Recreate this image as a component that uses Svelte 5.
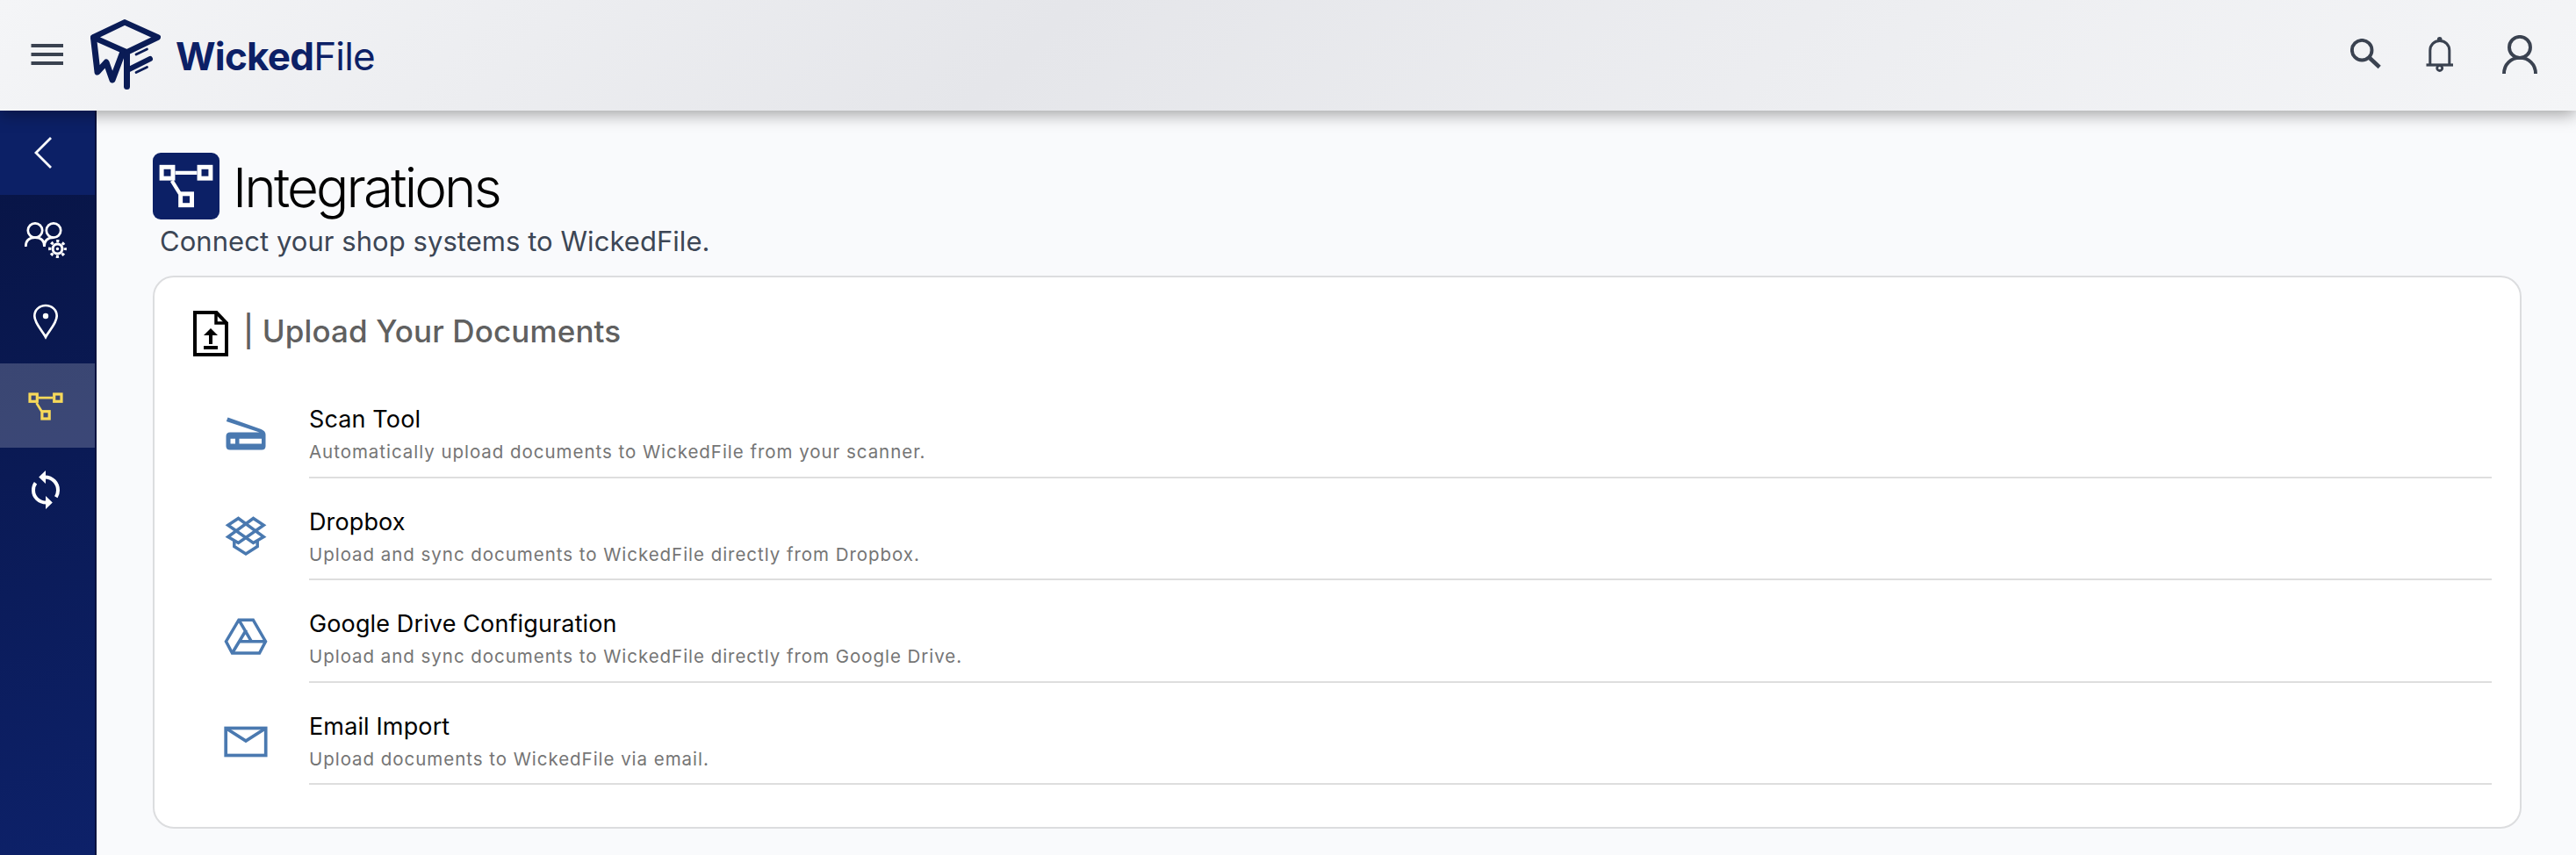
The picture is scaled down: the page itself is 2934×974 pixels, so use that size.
<script>
  /** @type {Array<{ icon: string, title: string, text: string }>} */
  const integrations = [
    {
      icon: "scan",
      title: "Scan Tool",
      text: "Automatically upload documents to WickedFile from your scanner."
    },
    {
      icon: "dropbox",
      title: "Dropbox",
      text: "Upload and sync documents to WickedFile directly from Dropbox."
    },
    {
      icon: "drive",
      title: "Google Drive Configuration",
      text: "Upload and sync documents to WickedFile directly from Google Drive."
    },
    {
      icon: "email",
      title: "Email Import",
      text: "Upload documents to WickedFile via email."
    }
  ];

  const navItems = ["back", "users", "location", "integrations", "sync"];
  const active = "integrations";
</script>

{#snippet flow()}
  <rect x="2" y="2" width="8.300" height="8.300" />
  <rect x="29.700" y="2" width="8.300" height="8.300" />
  <rect x="15.900" y="21.700" width="8.300" height="8.300" />
  <path d="M12 6.200H28M9.500 12L15.400 21.500" stroke-width="2.700" />
{/snippet}

<div class="app">
  <header class="topbar">
    <button class="menu" type="button" aria-label="Menu">
      <svg width="38" height="24" viewBox="0 0 38 24">
        <path d="M0.500 2H37M0.500 12H37M0.500 22H37" stroke="#3a4250" stroke-width="4" />
      </svg>
    </button>

    <div class="brand">
      <svg width="80" height="80" viewBox="0 0 80 80" fill="none" stroke="#0a1c56" stroke-linejoin="round" stroke-linecap="round">
        <path d="M3.200 20.500L39 3.300L76.800 20.500L41.500 37.500Z" stroke-width="6.400" />
        <path d="M3.500 21L8 60L18 49L25 69L37 37" stroke-width="7" />
        <path d="M41.500 38V76.500" stroke-width="7" />
        <path d="M44 57L68 45" stroke-width="6" />
        <path d="M52 40L64.500 34M52 60.500L64.500 54.500" stroke-width="2.800" />
      </svg>
      <span class="brand-name"><strong>Wicked</strong>File</span>
    </div>

    <div class="tools">
      <svg class="search" width="36" height="36" viewBox="0 0 36 36" fill="none" stroke="#3a4250">
        <circle cx="13.200" cy="13.200" r="11.300" stroke-width="3.900" />
        <path d="M22.200 22.200L33.200 32.500" stroke-width="4.600" />
      </svg>
      <svg class="bell" width="32" height="40" viewBox="0 0 32 40" fill="none" stroke="#3a4250">
        <path d="M4.800 32V15.500C4.800 9 9.500 4.500 15.800 4.500S26.800 9 26.800 15.500V32" stroke-width="3" />
        <path d="M0.500 32H31" stroke-width="3.200" />
        <circle cx="15.700" cy="35.500" r="3" stroke-width="2.800" />
        <circle cx="15.700" cy="2.900" r="2.800" fill="#3a4250" stroke="none" />
      </svg>
      <svg class="user" width="40" height="44" viewBox="0 0 40 44" fill="none" stroke="#3a4250" stroke-width="3.900">
        <circle cx="20" cy="13.900" r="12" />
        <path d="M2 44C2 33 10 25.900 20 25.900S38 33 38 44" />
      </svg>
    </div>
  </header>

  <div class="body">
    <nav class="sidebar">
      {#each navItems as item}
        <div class="nav-item" class:back={item === "back"} class:active={item === active}>
          {#if item === "back"}
            <svg width="108" height="96" viewBox="0 0 108 96" fill="none" stroke="#fff" stroke-width="2.800">
              <path d="M58 31L41 48L58 65" />
            </svg>
          {:else if item === "users"}
            <svg width="108" height="96" viewBox="0 0 108 96" fill="none" stroke="#fff" stroke-width="2.700">
              <circle cx="40" cy="40.500" r="8.200" />
              <circle cx="61" cy="40.500" r="8.200" />
              <path d="M29.300 59C29.300 52 33.500 48.700 40 48.700S50.500 52 50.500 59C50.500 52 54.500 48.700 61 48.700" />
              <circle cx="65.500" cy="61.500" r="5.400" stroke-width="3" />
              <circle cx="65.500" cy="61.500" r="8.800" stroke-width="3.200" stroke-dasharray="3.200 3.711" stroke-dashoffset="1.600" />
              <circle cx="65.500" cy="61.500" r="1.700" fill="#fff" stroke="none" />
            </svg>
          {:else if item === "location"}
            <svg width="108" height="96" viewBox="0 0 108 96" fill="none" stroke="#fff" stroke-width="2.700">
              <path d="M52 66C48.500 59.500 39.300 50 39.300 42C39.300 35 45 30 52 30S64.700 35 64.700 42C64.700 50 55.500 59.500 52 66Z" />
              <circle cx="52" cy="42" r="3.200" fill="#fff" stroke="none" />
            </svg>
          {:else if item === "integrations"}
            <svg class="nav-flow" width="40" height="32" viewBox="0 0 40 32" fill="none" stroke="#f7d95a" stroke-width="3.200">
              {@render flow()}
            </svg>
          {:else}
            <svg width="108" height="96" viewBox="0 0 108 96" fill="none" stroke="#fff" stroke-width="4">
              <path d="M51 33.500C60 33.500 66 40.500 66 48.500C66 51.500 65.200 54 63.800 56.300" />
              <path d="M53 62.500C44 62.500 38 56 38 48.500C38 45.500 38.800 42.500 40.500 40.300" />
              <path d="M52 26V41L44.200 33.500ZM52 55V70L59.800 62.500Z" fill="#fff" stroke="none" />
            </svg>
          {/if}
        </div>
      {/each}
    </nav>

    <main class="content">
      <div class="page-title">
        <span class="title-icon">
          <svg width="62" height="50" viewBox="0 0 40 32" fill="none" stroke="#fff" stroke-width="3.200">
            {@render flow()}
          </svg>
        </span>
        <h1>Integrations</h1>
      </div>
      <p class="subtitle">Connect your shop systems to WickedFile.</p>

      <section class="card">
        <div class="card-title">
          <svg width="40" height="52" viewBox="0 0 40 52" fill="none" stroke="#000" stroke-width="4">
            <path d="M2 2H26.500L38 14V50H2Z" />
            <path d="M26 2V14H38" stroke-width="3.500" />
            <path d="M20 38V26" />
            <path d="M12 42H28" />
            <path d="M20 20L28 28H12Z" fill="#000" stroke="none" />
          </svg>
          <h2>| Upload Your Documents</h2>
        </div>

        <div class="list">
          {#each integrations as item}
            <div class="row">
              <div class="row-icon">
                {#if item.icon === "scan"}
                  <svg width="50" height="50" viewBox="0 0 50 50">
                    <path fill="#4a79b0" fill-rule="evenodd" d="M4.500 5.500L42.500 19Q47.500 21 47.500 25V38Q47.500 42.500 43 42.500H7Q2.500 42.500 2.500 38V27Q2.500 22.500 7 22.500H40.500L2.800 10ZM7.500 29.700V35.500H13V29.700ZM17.500 29.700V35.500H43V29.700Z" />
                  </svg>
                {:else if item.icon === "dropbox"}
                  <svg width="50" height="50" viewBox="0 0 50 50" fill="none" stroke="#4a79b0" stroke-width="3.500">
                    <path d="M16.500 3.500L45.300 24.500L33.500 31.500L4.700 11.300Z" />
                    <path d="M33.500 3.500L4.700 24.500L16.500 31.500L45.300 11.300Z" />
                    <path d="M11.800 29V35.500L25 44L38.200 35.500V29" />
                  </svg>
                {:else if item.icon === "drive"}
                  <svg width="50" height="50" viewBox="0 0 50 50" fill="none" stroke="#4a79b0" stroke-width="3.500">
                    <path d="M17 3.200H33.300L47.500 27.700L40.500 41H9.500L2.500 27.700Z" />
                    <path d="M17 3.200L31.300 27.700M9.500 41L25.500 14.500M17.500 27.700H47" />
                  </svg>
                {:else}
                  <svg width="50" height="50" viewBox="0 0 50 50" fill="none" stroke="#4a79b0" stroke-width="3.700">
                    <rect x="2.200" y="9.500" width="45.500" height="31" />
                    <path d="M3 10L25 24L47 10" />
                  </svg>
                {/if}
              </div>
              <div class="row-text">
                <h3>{item.title}</h3>
                <p>{item.text}</p>
              </div>
            </div>
          {/each}
        </div>
      </section>
    </main>
  </div>
</div>

<style>
  :global(body) {
    background: #f9fafc;
  }

  .app {
    height: 974px;
    display: flex;
    flex-direction: column;
    overflow: hidden;
    font-family: Inter, "Liberation Sans", sans-serif;
  }

  .app svg {
    display: block;
    flex: none;
  }

  .topbar {
    position: relative;
    z-index: 1;
    flex: none;
    box-sizing: border-box;
    height: 126px;
    display: flex;
    align-items: center;
    padding: 0 44px 2px 35px;
    background: linear-gradient(135deg, #f4f5f7 0%, #e5e6ea 40%, #f4f5f7 100%);
    box-shadow: 0 4px 18px rgba(0, 0, 0, 0.37);
  }

  .menu {
    padding: 0;
    border: 0;
    background: none;
  }

  .brand {
    display: flex;
    align-items: center;
    gap: 17px;
    margin-left: 30px;
  }

  .brand-name {
    color: #0c2066;
    font-size: 44px;
    line-height: 54px;
    letter-spacing: -0.800px;
    margin-top: 3px;
  }

  .tools {
    display: flex;
    align-items: center;
    margin-left: auto;
  }

  .bell {
    margin-left: 50px;
  }

  .user {
    margin-left: 55px;
  }

  .body {
    flex: 1;
    display: flex;
    min-height: 0;
  }

  .sidebar {
    flex: none;
    width: 108px;
    border-right: 2px solid #07123f;
    background: linear-gradient(160deg, #081547 10%, #0d2169 100%);
  }

  .nav-item {
    height: 96px;
    display: flex;
    align-items: center;
  }

  .nav-item.back {
    background: #0c2066;
  }

  .nav-item.active {
    background: rgba(255, 255, 255, 0.2);
  }

  .nav-flow {
    margin: 2px 0 0 32px;
  }

  .content {
    flex: 1;
    padding: 48px 62px 0 64px;
  }

  .page-title {
    display: flex;
    align-items: center;
    height: 76px;
    gap: 15px;
  }

  .title-icon {
    width: 76px;
    height: 76px;
    border-radius: 9px;
    background: #0c2066;
    display: flex;
    align-items: center;
    justify-content: center;
  }

  h1,
  h2,
  h3,
  p {
    margin: 0;
  }

  h1 {
    padding-top: 4px;
    font-size: 62px;
    font-weight: 330;
    line-height: 76px;
    letter-spacing: -2.900px;
    color: #000;
  }

  .subtitle {
    height: 64px;
    padding-left: 8px;
    font-size: 31px;
    line-height: 50px;
    letter-spacing: 0.050px;
    color: #3c4655;
  }

  .card {
    box-sizing: border-box;
    height: 630px;
    padding: 38px 32px 0 44px;
    border: 2px solid #dcdddf;
    border-radius: 24px;
    background: #fff;
  }

  .card-title {
    display: flex;
    height: 74.300px;
    gap: 17px;
  }

  h2 {
    font-size: 35px;
    font-weight: 500;
    line-height: 46px;
    letter-spacing: 0.130px;
    color: #606060;
  }

  .row {
    display: flex;
    height: 116.500px;
  }

  .row-icon {
    width: 132px;
    padding: 42px 0 0 35px;
    box-sizing: border-box;
  }

  .row-text {
    flex: 1;
    box-sizing: border-box;
    padding-top: 32px;
    border-bottom: 2px solid #dedede;
  }

  h3 {
    font-size: 27px;
    font-weight: 400;
    line-height: 36px;
    letter-spacing: 0.130px;
    color: #000;
  }

  .row-text p {
    font-size: 20.500px;
    line-height: 37px;
    letter-spacing: 0.960px;
    color: #757575;
  }
</style>
